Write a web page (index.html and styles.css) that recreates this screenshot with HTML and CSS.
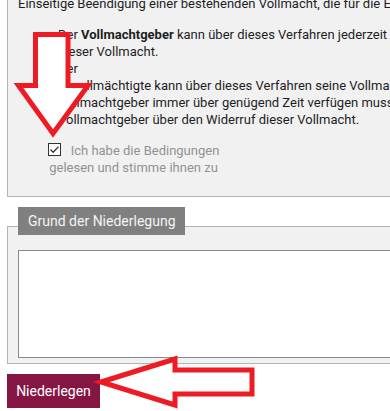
FILE: index.html
```html
<!DOCTYPE html>
<html lang="de">
<head>
<meta charset="utf-8">
<title>Niederlegung</title>
<link rel="stylesheet" href="styles.css">
</head>
<body>
<div class="page">
  <div class="panel terms">
    <p class="lead">Einseitige Beendigung einer bestehenden Vollmacht, die für die Erteilung von Auskünften</p>
    <div class="rules">
      <div class="line">Der <b>Vollmachtgeber</b> kann über dieses Verfahren jederzeit den Widerruf</div>
      <div class="line">dieser Vollmacht.</div>
      <div class="line">Der</div>
      <div class="line">Bevollmächtigte kann über dieses Verfahren seine Vollmacht niederlegen.</div>
      <div class="line">Vollmachtgeber immer über genügend Zeit verfügen muss, informiert</div>
      <div class="line">Vollmachtgeber über den Widerruf dieser Vollmacht.</div>
    </div>
    <label class="agree"><span class="box"><svg viewBox="0 0 13 13" width="13" height="13"><path d="M2.5 6.5 L5.2 9.2 L10.5 3.6" fill="none" stroke="#333" stroke-width="1.3"/></svg></span>Ich habe die Bedingungen gelesen und stimme ihnen zu</label>
  </div>

  <div class="reason">
    <div class="legend">Grund der Niederlegung</div>
    <div class="panel reason-box">
      <textarea class="reason-text"></textarea>
    </div>
  </div>

  <button class="btn" type="button">Niederlegen</button>

  <svg class="arrows" viewBox="0 0 390 411" width="390" height="411">
    <polygon points="35.5,34.5 68,34.5 68,85.5 88,85.5 53,133.5 18.5,85.5 35.5,85.5" fill="#fff" stroke="#ed1c24" stroke-width="5"/>
    <polygon points="101,382 175,359 175,370 252,370 252,394 175,394 175,405" fill="#fff" stroke="#ed1c24" stroke-width="5"/>
  </svg>
</div>
</body>
</html>
```

FILE: styles.css
```css
html, body {
  margin: 0;
  padding: 0;
  background: #fff;
  overflow: hidden;
}

.page {
  position: relative;
  width: 390px;
  height: 411px;
  overflow: hidden;
  font-family: Roboto, "Liberation Sans", sans-serif;
  font-size: 13px;
  line-height: 17px;
  color: #1e1e1e;
}

.panel {
  margin-left: 7px;
  width: 500px;
  background: #f1f1f1;
  border: 1px solid #b3b3b3;
}

.terms {
  margin-top: -20px;
  padding: 14px 0 20px 10px;
}

.lead {
  margin: 0 0 14px;
  white-space: nowrap;
}

.rules {
  padding-left: 40px;
}

.line {
  white-space: nowrap;
}

.rules b {
  font-weight: 700;
}

.agree {
  display: block;
  margin: 14px 0 0 28px;
  width: 175px;
  text-align: center;
  color: #929292;
}

.box {
  display: inline-block;
  width: 13px;
  height: 13px;
  margin-right: 10px;
  vertical-align: -1px;
  background: #fff;
  box-sizing: border-box;
  border: 1px solid #333;
  position: relative;
}

.box svg {
  position: absolute;
  left: -1px;
  top: -1px;
}

.reason {
  margin-top: 10px;
}

.legend {
  position: relative;
  z-index: 1;
  display: block;
  margin-left: 18px;
  width: 167px;
  height: 28px;
  box-sizing: border-box;
  padding-left: 10px;
  white-space: nowrap;
  background: #808080;
  color: #f4f4f4;
  font-size: 14px;
  line-height: 28px;
}

.reason-box {
  margin-top: -9px;
  padding: 23px 0 5px 10px;
}

.reason-text {
  display: block;
  width: 480px;
  height: 108px;
  box-sizing: border-box;
  margin: 0;
  border: 1px solid #8a8a8a;
  background: #fff;
  resize: none;
}

.btn {
  display: block;
  margin: 10px 0 0 7px;
  width: 93px;
  height: 34px;
  border: 0;
  padding: 0;
  background: #851644;
  color: #fff;
  font-family: Roboto, "Liberation Sans", sans-serif;
  font-size: 14px;
}

.arrows {
  position: absolute;
  left: 0;
  top: 0;
  pointer-events: none;
}
```
